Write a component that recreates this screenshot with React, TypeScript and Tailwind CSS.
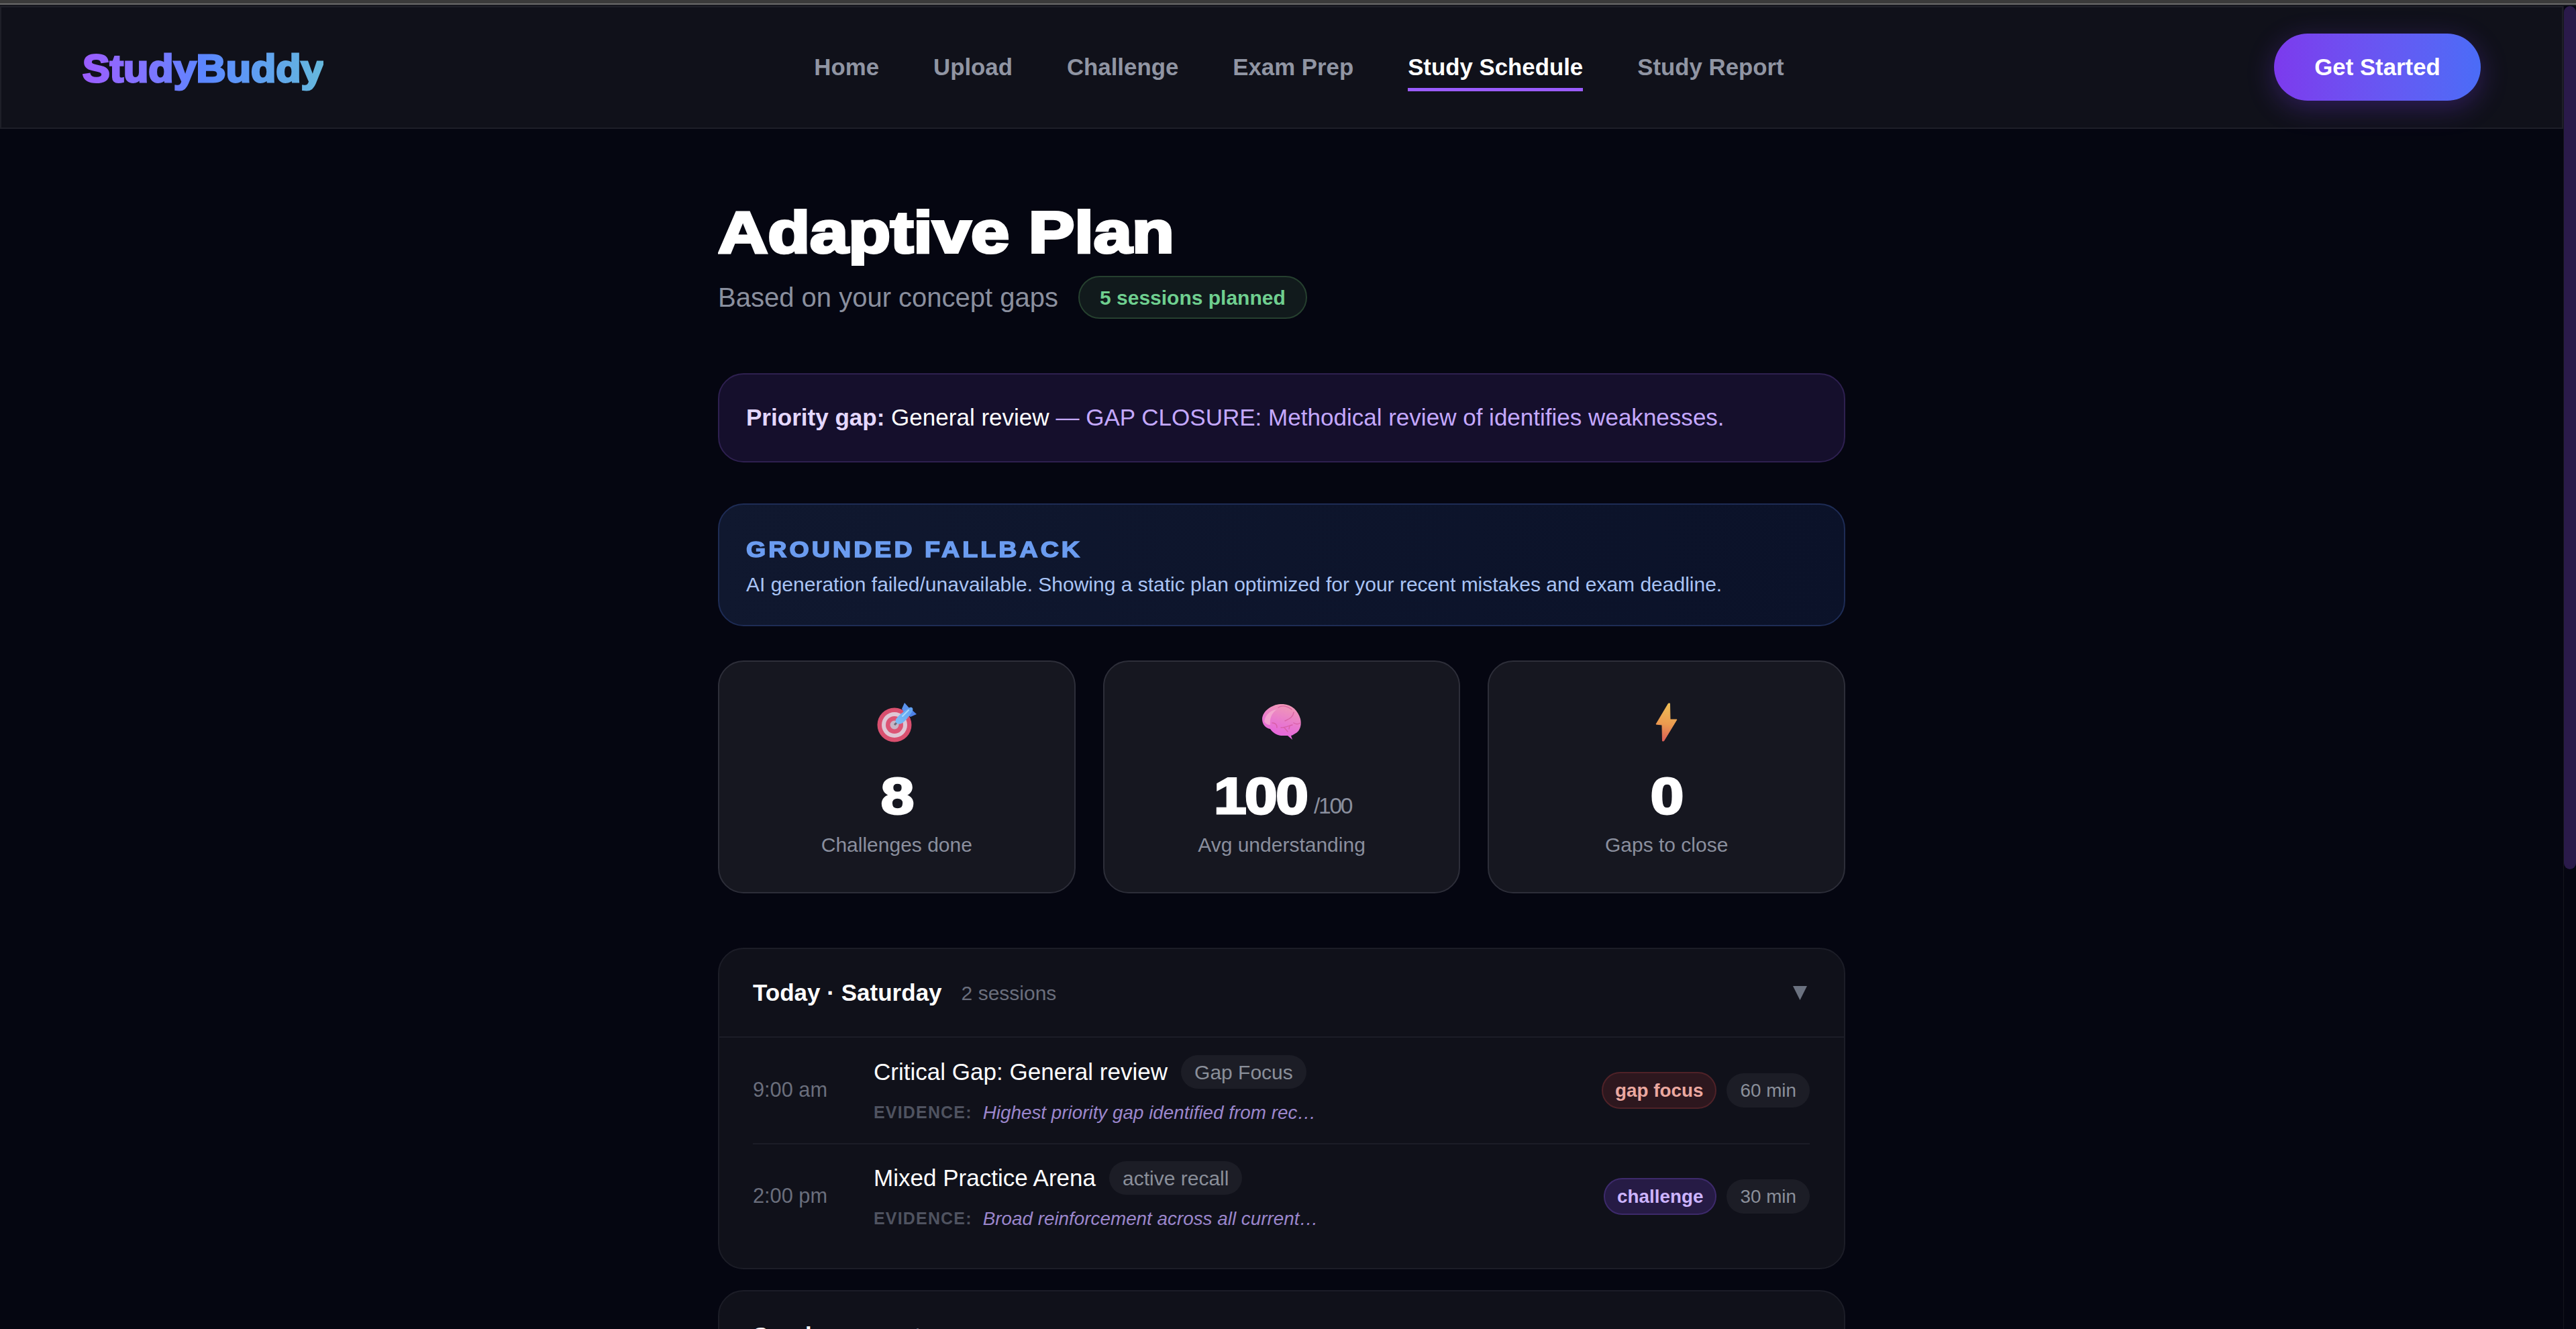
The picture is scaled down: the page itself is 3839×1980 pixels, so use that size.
const sans = "font-['Liberation_Sans',Arial,sans-serif]";

function TargetIcon() {
  return (
    <svg width="59" height="59" viewBox="0 0 59 59" className="block">
      <defs>
        <linearGradient id="dart" x1="0" y1="1" x2="1" y2="0">
          <stop offset="0" stopColor="#7cc0f7" />
          <stop offset="1" stopColor="#5f9ff2" />
        </linearGradient>
      </defs>
      <circle cx="26" cy="33" r="25.5" fill="#d9506f" />
      <circle cx="26" cy="33" r="19" fill="#dfc7d5" />
      <circle cx="26" cy="33" r="13" fill="#dc5575" />
      <circle cx="26" cy="33" r="6.5" fill="#c6b6c6" />
      <line x1="26" y1="33" x2="32" y2="27" stroke="#6b6b78" strokeWidth="3" />
      <path d="M41 0 L50 10 L43 19 L37 9 Z" fill="#5b93ee" />
      <path d="M59 17 L48 7 L40 16 L50 21 Z" fill="#4d82e8" />
      <path d="M28 25 C30 20 42 11 49 7 C53 6 54 9 53 12 C49 19 41 29 36 31 C31 33 26 30 28 25 Z" fill="url(#dart)" />
      <path d="M38 20 L47 11" stroke="#a9d8fa" strokeWidth="2" strokeLinecap="round" />
    </svg>
  );
}

function BrainIcon() {
  return (
    <svg width="58" height="54" viewBox="0 0 58 54" className="block">
      <defs>
        <linearGradient id="brain" x1="0.7" y1="0" x2="0.4" y2="1">
          <stop offset="0" stopColor="#f09bb4" />
          <stop offset="0.55" stopColor="#e878cf" />
          <stop offset="1" stopColor="#e660e0" />
        </linearGradient>
      </defs>
      <path d="M0 22 C1 10 14 1 27 0 C42 -1 53 8 57 22 C59 30 57 40 49 44 C46 46 44 47 43 47 L45 53 L38 47 L28 47 C21 46 15 42 12 37 C6 36 0 31 0 22 Z" fill="url(#brain)" />
      <path d="M3 26 C5 14 14 9 22 8 C14 13 11 22 12 31 C8 31 5 29 3 26 Z" fill="#f5b0d2" opacity="0.75" />
      <path d="M24 5 C30 1 38 3 44 8 M47 12 C46 20 40 22 34 25 M47 28 C50 30 54 30 57 28 M28 35 C33 35 38 33 45 31 M33 35 L38 41 M41 32 L40 37 M15 28 C20 28 22 31 22 35" fill="none" stroke="#d45a9c" strokeWidth="1.4" strokeLinecap="round" opacity="0.8" />
    </svg>
  );
}

function BoltIcon() {
  return (
    <svg width="33" height="58" viewBox="0 0 33 58" className="block">
      <defs>
        <linearGradient id="bolt" x1="0.5" y1="0" x2="0.4" y2="1">
          <stop offset="0" stopColor="#efbe57" />
          <stop offset="0.55" stopColor="#eb9a4f" />
          <stop offset="1" stopColor="#dc5f57" />
        </linearGradient>
      </defs>
      <path d="M19.5 1 L21.5 1 L22 25 L32 25 L12.5 57 L10.5 57 L10 33 L1 32 Z" fill="url(#bolt)" stroke="url(#bolt)" strokeWidth="1" strokeLinejoin="round" />
    </svg>
  );
}

function Stat({ icon, value, suffix, label }: { icon: React.ReactNode; value: string; suffix?: string; label: string }) {
  return (
    <div className="flex h-[347px] flex-col items-center rounded-[38px] border-2 border-[#2d2e39] bg-[#161720] pt-[60px]">
      <div className="flex h-[60px] items-center justify-center">{icon}</div>
      <div className={`mt-[40px] flex h-[78px] items-baseline justify-center text-[76.8px] leading-[78px] font-bold tracking-[-2.3px] text-white ${suffix ? "pl-[20px]" : ""}`}>
        <span className={`inline-block [-webkit-text-stroke:3px_#fff] ${suffix ? "origin-right scale-x-[1.14]" : "origin-center scale-x-[1.16]"}`}>{value}</span>
        {suffix && <span className="ml-[11px] text-[33.6px] font-normal text-[#8a8f9e]">{suffix}</span>}
      </div>
      <div className="mt-[15px] text-[30px] leading-[40px] text-[#8a8f9e]">{label}</div>
    </div>
  );
}

function Row({ time, title, tag, evidence, kind, kindClass, minutes, divider }: { time: string; title: string; tag: string; evidence: string; kind: string; kindClass: string; minutes: string; divider?: boolean }) {
  return (
    <div className={`flex h-[157px] items-center ${divider ? "border-t-2 border-[#1c1d27]" : ""}`}>
      <div className="w-[180px] shrink-0 text-[30.72px] text-[#6a6e7c]">{time}</div>
      <div className="min-w-0 flex-1 pt-[4px]">
        <div className="-mt-[2px] flex items-center gap-[20px]">
          <span className="text-[35.04px] leading-[50px] text-white">{title}</span>
          <span className="flex h-[50px] items-center rounded-full bg-[#1c1d26] px-[20px] text-[30px] text-[#8a8f9a]">{tag}</span>
        </div>
        <div className="mt-[15px] flex items-center gap-[16px]">
          <span className="text-[24.96px] font-bold tracking-[1.2px] text-[#4f5360]">EVIDENCE:</span>
          <span className="w-[500px] truncate text-[27.84px] italic text-[#9b86cc]">{evidence}</span>
        </div>
      </div>
      <div className="flex items-center gap-[15px]">
        <span className={`flex h-[55px] items-center rounded-full border-2 px-[18px] text-[27.84px] font-bold ${kindClass}`}>{kind}</span>
        <span className="flex h-[51px] items-center rounded-full bg-[#1c1d26] px-[20px] text-[27.84px] text-[#8a8f9a]">{minutes}</span>
      </div>
    </div>
  );
}

export default function App() {
  const links = ["Home", "Upload", "Challenge", "Exam Prep", "Study Schedule", "Study Report"];
  return (
    <div className={`${sans} flex h-[1980px] flex-col overflow-hidden bg-[#050611]`}>
      <div className="h-[5px] shrink-0 bg-[#3a3a3a]" />
      <div className="h-[2px] shrink-0 bg-[#6b6b6b]" />
      <div className="h-[2px] shrink-0 bg-[#15161d]" />
      <div className="flex min-h-0 flex-1">
        <div className="min-w-0 flex-1">
          <nav className="flex h-[183px] items-center justify-between border-2 border-[#1e1f28] bg-[#10111a] pr-[121px] pb-[1px] pl-[121px]">
            <div className="w-[360px] pt-[5px]">
              <div className="inline-block origin-left scale-x-[1.06] bg-gradient-to-r from-[#9b5cff] via-[#5b86ff] to-[#66b8dc] bg-clip-text text-[57.6px] font-bold text-transparent [-webkit-text-stroke:3px_transparent]">StudyBuddy</div>
            </div>
            <div className="flex items-center gap-[81px]">
              {links.map((l) => (
                <div key={l} className={`relative text-[34.8px] font-bold ${l === "Study Schedule" ? "text-white" : "text-[#9095a3]"}`}>
                  {l}
                  {l === "Study Schedule" && <div className="absolute right-0 -bottom-[10px] left-0 h-[5px] bg-[#9a5cff]" />}
                </div>
              ))}
            </div>
            <button className="h-[100px] w-[308px] rounded-full bg-gradient-to-r from-[#7c3aed] to-[#4a6cf7] text-[34.8px] font-bold text-white shadow-[0_10px_40px_rgba(124,58,237,0.3)]">Get Started</button>
          </nav>

          <main className="mx-auto w-[1680px]">
            <h1 className="mt-[106px] origin-left scale-x-[1.19] text-[86.4px] leading-[96px] font-bold text-white [-webkit-text-stroke:4px_#fff]">Adaptive Plan</h1>
            <div className="mt-[17px] flex items-center gap-[30px]">
              <span className="text-[40px] text-[#8a8f9e]">Based on your concept gaps</span>
              <span className="flex h-[64px] items-center rounded-full border-2 border-[#26402f] bg-[#111a1c] px-[30px] text-[30px] font-bold text-[#6fcf8f]">5 sessions planned</span>
            </div>

            <div className="mt-[81px] flex h-[133px] items-center rounded-[38px] border-2 border-[#2e2050] bg-[#150f2c] px-[40px] text-[35.04px] text-[#c4a8ff]">
              <p><b className="text-[#e4d8ff]">Priority gap:</b> <span className="text-white">General review</span> — GAP CLOSURE: Methodical review of identifies weaknesses.</p>
            </div>

            <div className="mt-[61px] flex h-[183px] flex-col justify-center rounded-[38px] border-2 border-[#1e2c55] bg-gradient-to-r from-[#10182f] to-[#0b1229] px-[40px] pt-[5px]">
              <div className="origin-left scale-x-[1.12] text-[33.6px] leading-[44px] font-bold tracking-[3.6px] text-[#6b9cf0] [-webkit-text-stroke:1.5px_#6b9cf0]">GROUNDED FALLBACK</div>
              <div className="mt-[9px] text-[30px] leading-[42px] text-[#a9c4f5]">AI generation failed/unavailable. Showing a static plan optimized for your recent mistakes and exam deadline.</div>
            </div>

            <div className="mt-[51px] grid grid-cols-3 gap-[41px]">
              <Stat icon={<TargetIcon />} value="8" label="Challenges done" />
              <Stat icon={<BrainIcon />} value="100" suffix="/100" label="Avg understanding" />
              <Stat icon={<BoltIcon />} value="0" label="Gaps to close" />
            </div>

            <section className="mt-[81px] rounded-[38px] border-2 border-[#1c1d27] bg-[#10111a]">
              <div className="flex h-[132px] items-center justify-between border-b-2 border-[#1c1d27] pr-[55px] pl-[50px]">
                <div className="flex items-center gap-[29px]">
                  <span className="text-[35.04px] font-bold text-white">Today · Saturday</span>
                  <span className="text-[30px] text-[#6a6e7c]">2 sessions</span>
                </div>
                <svg width="21" height="21" viewBox="0 0 21 21" className="block"><polygon points="0,0 21,0 10.5,21" fill="#6b7280" /></svg>
              </div>
              <div className="pr-[51px] pb-[29px] pl-[50px]">
                <Row time="9:00 am" title="Critical Gap: General review" tag="Gap Focus" evidence="Highest priority gap identified from recent mistakes" kind="gap focus" kindClass="border-[#4f2228] bg-[#2d171e] text-[#eba8a0]" minutes="60 min" />
                <Row divider time="2:00 pm" title="Mixed Practice Arena" tag="active recall" evidence="Broad reinforcement across all current topics and gaps" kind="challenge" kindClass="border-[#3d2a6b] bg-[#261b45] text-[#cdb4ff]" minutes="30 min" />
              </div>
            </section>

            <section className="mt-[31px] h-[300px] rounded-[38px] border-2 border-[#1c1d27] bg-[#10111a]">
              <div className="flex h-[132px] items-center justify-between pr-[55px] pl-[50px]">
                <div className="flex items-center gap-[29px]">
                  <span className="text-[35.04px] font-bold text-white">Sunday</span>
                  <span className="text-[30px] text-[#6a6e7c]">3 sessions</span>
                </div>
                <svg width="21" height="21" viewBox="0 0 21 21" className="block"><polygon points="0,0 21,0 10.5,21" fill="#6b7280" /></svg>
              </div>
            </section>
          </main>
        </div>
        <div className="w-[19px] shrink-0 border-l border-[#15161d] bg-[#050611]">
          <div className="h-[1286px] rounded-full bg-[#2a1a4a]" />
        </div>
      </div>
    </div>
  );
}
